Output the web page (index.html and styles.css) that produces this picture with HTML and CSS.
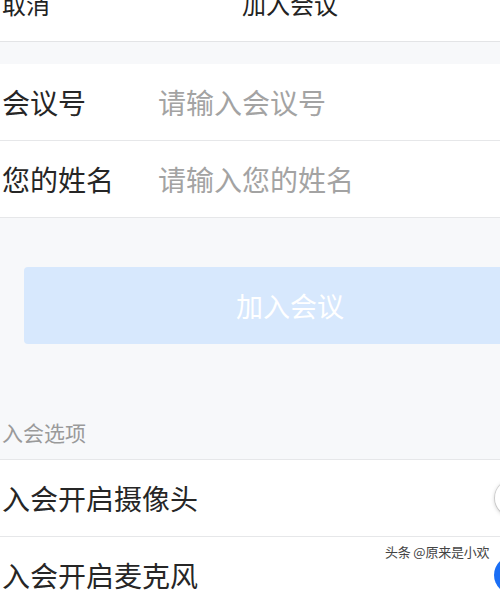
FILE: index.html
```html
<!DOCTYPE html>
<html lang="zh">
<head>
<meta charset="utf-8">
<link rel="stylesheet" href="styles.css">
</head>
<body>
<div class="page">
  <header class="nav">
    <span class="nav-cancel">取消</span>
    <span class="nav-title">加入会议</span>
  </header>
  <div class="gap-top"></div>
  <section class="form">
    <div class="row">
      <span class="label">会议号</span>
      <span class="placeholder">请输入会议号</span>
    </div>
    <div class="row">
      <span class="label">您的姓名</span>
      <span class="placeholder">请输入您的姓名</span>
    </div>
  </section>
  <div class="btn-wrap">
    <div class="btn">加入会议</div>
  </div>
  <div class="section-title">入会选项</div>
  <section class="form">
    <div class="row opt">
      <span class="label">入会开启摄像头</span>
      <span class="switch"><span class="knob"></span></span>
    </div>
    <div class="row opt">
      <span class="label">入会开启麦克风</span>
      <span class="switch on"><span class="knob"></span></span>
    </div>
  </section>
</div>
<div class="watermark">头条 @原来是小欢</div>
</body>
</html>
```
FILE: styles.css
```css
html, body {
  margin: 0;
  padding: 0;
}
body {
  width: 500px;
  height: 600px;
  overflow: hidden;
  background: #f7f8fa;
  font-family: "Noto Sans CJK SC", "Noto Sans", sans-serif;
  position: relative;
}
.page {
  width: 580px;
  margin-top: -35px;
}
.nav {
  height: 76px;
  background: #fff;
  border-bottom: 1px solid #e3e4e6;
  position: relative;
  display: flex;
  align-items: center;
  justify-content: center;
}
.nav-cancel {
  position: absolute;
  left: 2px;
  top: 50%;
  transform: translateY(-50%);
  font-size: 24px;
  color: #222;
}
.nav-title {
  font-size: 24px;
  color: #222;
}
.gap-top {
  height: 22px;
}
.form {
  background: #fff;
}
.row {
  height: 77px;
  border-bottom: 1px solid #e6e7e9;
  display: flex;
  align-items: center;
  box-sizing: border-box;
}
.label {
  font-size: 28px;
  color: #262626;
  padding-left: 2px;
  width: 156px;
  white-space: nowrap;
}
.placeholder {
  font-size: 28px;
  color: #a3a3a3;
}
.btn-wrap {
  padding: 49px 24px 0;
}
.btn {
  height: 77px;
  border-radius: 4px;
  background: #d7e8fd;
  color: #fff;
  font-size: 27px;
  display: flex;
  align-items: center;
  justify-content: center;
}
.section-title {
  font-size: 21px;
  color: #9a9a9a;
  padding-left: 2px;
  height: 116px;
  padding-bottom: 16px;
  display: flex;
  align-items: flex-end;
  box-sizing: border-box;
  line-height: 1;
  border-bottom: 1px solid #e6e7e9;
}
.opt {
  justify-content: space-between;
  padding-right: 24px;
}
.opt .label {
  width: auto;
}
.switch {
  width: 62px;
  height: 38px;
  border-radius: 19px;
  background: #fff;
  box-shadow: inset 0 0 0 1px #e2e2e2;
  position: relative;
}
.switch .knob {
  position: absolute;
  left: 1px;
  top: 1px;
  width: 36px;
  height: 36px;
  border-radius: 50%;
  background: #fff;
  box-shadow: 0 1px 4px rgba(0,0,0,0.25);
}
.switch.on {
  background: #1a6ef5;
  box-shadow: none;
}
.switch.on .knob {
  left: auto;
  right: 1px;
}
.watermark {
  position: absolute;
  left: 385px;
  top: 542px;
  font-size: 13px;
  color: #444;
  letter-spacing: -0.2px;
  white-space: nowrap;
  text-shadow: 0 0 2px #fff;
}
```
